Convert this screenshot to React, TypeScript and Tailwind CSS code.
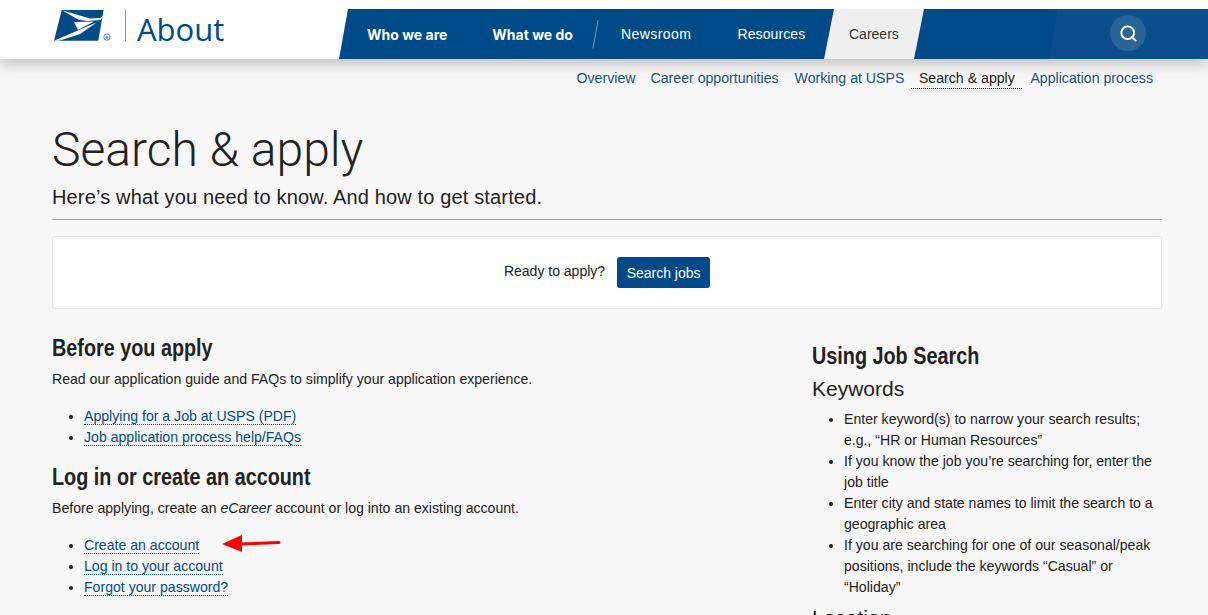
import React from "react";
import { Search } from "lucide-react";

function Logo() {
  return (
    <svg width="60" height="36" viewBox="0 0 60 36" className="block shrink-0">
      <polygon points="7.7,0 49.6,0 44.3,30.8 0,30.8" fill="#004b87" />
      <polygon points="8,0.3 36,8.5 46,8 49,5.5 47,10 33,11 24,9.5" fill="#fff" />
      <polygon points="20,12 40,11.5 24,20" fill="#fff" />
      <polygon points="0,30.8 40,13.5 42,13 26,24 5,30.8" fill="#fff" />
      <circle cx="53" cy="27" r="3.2" fill="none" stroke="#5c86ab" strokeWidth="1" />
      <circle cx="53" cy="27" r="1.2" fill="#5c86ab" />
    </svg>
  );
}

function A({ children }: { children: React.ReactNode }) {
  return <a className="text-[#004b87] border-b border-dotted border-[#004b87] leading-[16px] inline-block">{children}</a>;
}

const narrow = "font-bold text-[24px] leading-[30px] text-[#222] origin-left scale-x-[0.825] whitespace-nowrap";

export default function App() {
  return (
    <div className="h-[615px] w-full overflow-hidden bg-[#f7f7f7] text-[#222] font-['Liberation_Sans',Arial,sans-serif] relative">
      <header className="h-[59px] bg-white flex shadow-[0_4px_14px_rgba(0,0,0,0.25)] relative">
        <div className="w-[339px] shrink-0 flex items-start pl-[54px] pt-[10px]">
          <Logo />
          <div className="w-px h-[31px] bg-[#6c97bb] ml-[11px]" />
          <span className="ml-[11px] text-[31px] leading-[40px] -mt-[1px] text-[#004b87] font-['Open_Sans',sans-serif] font-normal">About</span>
        </div>
        <nav className="mt-[9px] h-[50px] flex-1 bg-[#004b87] [clip-path:polygon(9px_0,100%_0,100%_100%,0_100%)] relative flex items-center pl-[28px] text-white">
          <span className="font-['Inter',sans-serif] font-bold text-[14px] mr-[45px]">Who we are</span>
          <span className="font-['Inter',sans-serif] font-bold text-[14px]">What we do</span>
          <span className="w-px h-[29px] bg-[#6f97bb] rotate-[10deg] ml-[22px] mr-[25px]" />
          <span className="text-[14px] tracking-[0.45px] mr-[46px]">Newsroom</span>
          <span className="text-[14px] tracking-[0.1px]">Resources</span>
          <div className="absolute left-[485px] top-0 h-[50px] w-[100px] bg-[#efefef] [clip-path:polygon(10px_0,100%_0,90px_100%,0_100%)] flex items-center pl-[25px] text-[#333] text-[14px]">Careers</div>
          <div className="absolute left-[710px] top-0 h-[50px] right-0 bg-[#0a4f8c] [clip-path:polygon(9px_0,100%_0,100%_100%,0_100%)]" />
          <div className="absolute left-[771px] top-[6px] w-9 h-9 rounded-full bg-[#2a6496] flex items-center justify-center">
            <Search size={19} strokeWidth={2.5} className="text-white" />
          </div>
        </nav>
      </header>

      <div className="px-[52px] w-[1214px]">
        <div className="h-[39px] flex justify-end items-center pr-[9px] text-[14.15px] text-[#17527f]">
          <a className="mr-[15px]">Overview</a>
          <a className="mr-[16px]">Career opportunities</a>
          <a className="mr-[7px]">Working at USPS</a>
          <a className="w-[111px] text-center mr-[8px] text-[#222] border-b border-dotted border-[#222] leading-[20px]">Search &amp; apply</a>
          <a>Application process</a>
        </div>

        <h1 className="mt-[24px] text-[48px] leading-[56px] font-light font-['Roboto',sans-serif] text-[#222]">Search &amp; apply</h1>
        <p className="mt-[6px] text-[20px] leading-[26px] tracking-[0.15px]">Here’s what you need to know. And how to get started.</p>
        <div className="mt-[9px] w-[1110px] h-px bg-[#aaa]" />

        <div className="mt-[16px] w-[1110px] h-[73px] bg-white border border-[#e3e3e3] rounded-[3px] flex items-center justify-center text-[14px]">
          <span className="mr-[12px] -mt-[2px]">Ready to apply?</span>
          <span className="h-[31px] w-[93px] pt-[2px] justify-center rounded-[3px] bg-[#004b87] text-white flex items-center text-[14px]">Search jobs</span>
        </div>

        <div className="mt-[24px] w-[1110px] flex">
          <div className="w-[760px] text-[14.1px] leading-[21px]">
            <h2 className={narrow}>Before you apply</h2>
            <p className="mt-[6px]">Read our application guide and FAQs to simplify your application experience.</p>
            <ul className="mt-[16px] list-disc pl-[32px]">
              <li><A>Applying for a Job at USPS (PDF)</A></li>
              <li><A>Job application process help/FAQs</A></li>
            </ul>
            <h2 className={"mt-[14px] " + narrow}>Log in or create an account</h2>
            <p className="mt-[6px]">Before applying, create an <em>eCareer</em> account or log into an existing account.</p>
            <ul className="mt-[16px] list-disc pl-[32px]">
              <li><A>Create an account</A></li>
              <li><A>Log in to your account</A></li>
              <li><A>Forgot your password?</A></li>
            </ul>
          </div>
          <div className="w-[350px] pt-[8px] text-[14.1px] leading-[21px]">
            <h2 className={narrow}>Using Job Search</h2>
            <h3 className="mt-[4px] text-[21px] leading-[28px]">Keywords</h3>
            <ul className="mt-[6px] list-disc pl-[32px]">
              <li>Enter keyword(s) to narrow your search results; e.g., “HR or Human Resources”</li>
              <li>If you know the job you’re searching for, enter the job title</li>
              <li>Enter city and state names to limit the search to a geographic area</li>
              <li>If you are searching for one of our seasonal/peak positions, include the keywords “Casual” or “Holiday”</li>
            </ul>
            <h3 className="mt-[6px] text-[21px] leading-[28px]">Location</h3>
          </div>
        </div>
      </div>

      <svg className="absolute left-[220px] top-[534px]" width="62" height="20" viewBox="0 0 62 20">
        <polygon points="2,10 22,1 22,18" fill="#f00" />
        <line x1="20" y1="10" x2="59" y2="8.5" stroke="#f00" strokeWidth="3" strokeLinecap="round" />
      </svg>
    </div>
  );
}
